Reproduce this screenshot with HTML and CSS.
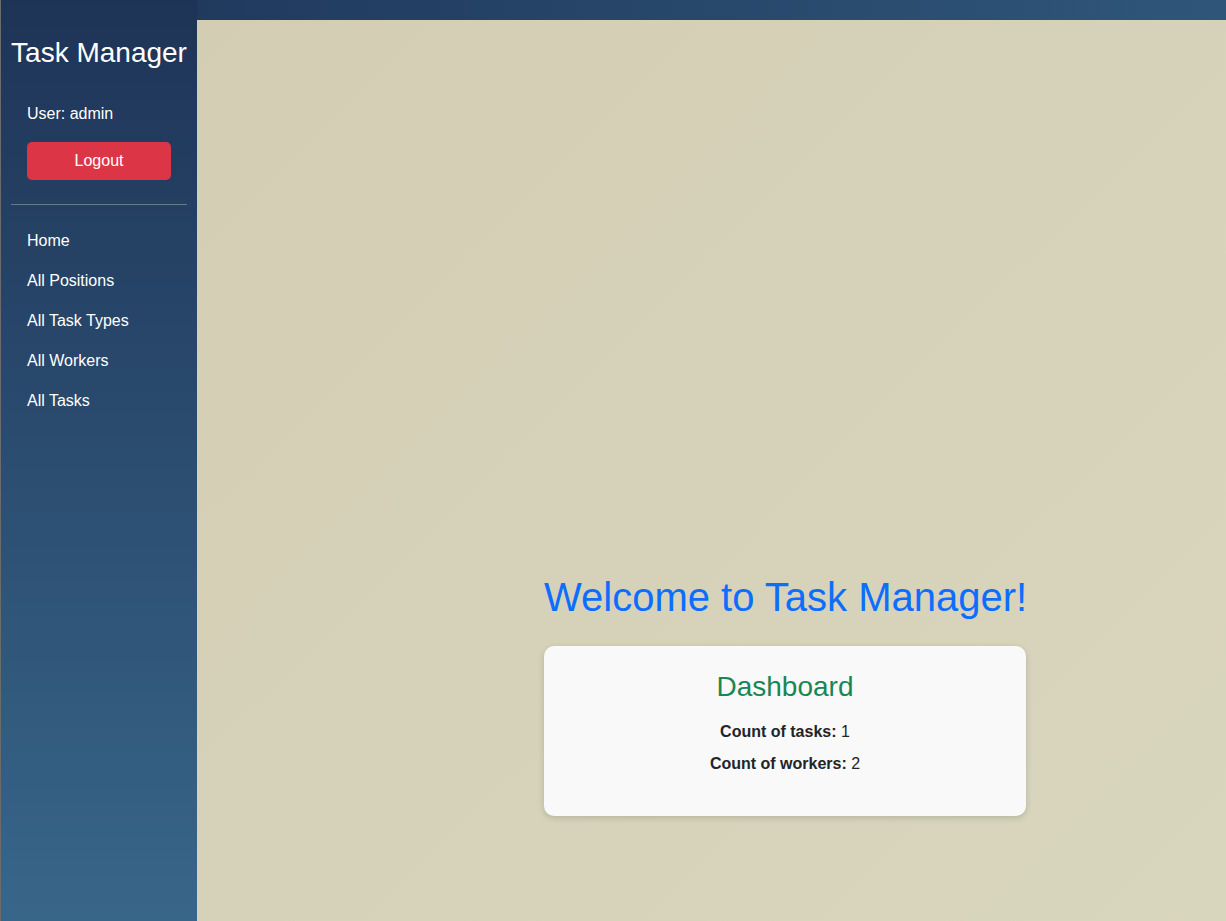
FILE: index.html
```html
<!DOCTYPE html>
<html lang="en">
<head>
<meta charset="utf-8">
<title>Task Manager</title>
<link rel="stylesheet" href="styles.css">
</head>
<body>
<aside class="sidebar">
  <h3 class="brand">Task Manager</h3>
  <div class="user">User: admin</div>
  <button class="logout">Logout</button>
  <hr class="divider">
  <nav class="nav">
    <a href="#">Home</a>
    <a href="#">All Positions</a>
    <a href="#">All Task Types</a>
    <a href="#">All Workers</a>
    <a href="#">All Tasks</a>
  </nav>
</aside>
<div class="main">
  <div class="topbar"></div>
  <div class="content">
    <div class="welcome">
      <h1 class="title">Welcome to Task Manager!</h1>
      <div class="card">
        <h3 class="card-title">Dashboard</h3>
        <p><strong>Count of tasks:</strong> 1</p>
        <p><strong>Count of workers:</strong> 2</p>
      </div>
    </div>
  </div>
</div>
</body>
</html>
```
FILE: styles.css
```css
* { box-sizing: border-box; }
html, body { height: 100%; }
body {
  margin: 0;
  display: flex;
  font-family: "Liberation Sans", Arial, sans-serif;
  font-size: 16px;
  line-height: 1.5;
  color: #212529;
  overflow: hidden;
}
.sidebar {
  width: 197px;
  flex: 0 0 197px;
  border-left: 1px solid #6b6b6b;
  background: linear-gradient(180deg, #1e3457 0%, #386689 100%);
  padding: 36px 10px 10px;
  color: #fff;
  display: flex;
  flex-direction: column;
}
.brand {
  margin: 0;
  font-size: 28px;
  font-weight: 400;
  line-height: 1.2;
  text-align: center;
  white-space: nowrap;
}
.user {
  margin: 32px 16px 0;
  line-height: 24px;
}
.logout {
  margin: 16px 16px 0;
  height: 38px;
  border: none;
  border-radius: 5px;
  background: #dc3545;
  color: #fff;
  font-family: inherit;
  font-size: 16px;
}
.divider {
  margin: 24px 0 16px;
  border: 0;
  border-top: 1px solid rgba(255,255,255,0.3);
  height: 0;
}
.nav { display: flex; flex-direction: column; }
.nav a {
  color: #fff;
  text-decoration: none;
  padding: 8px 16px;
  line-height: 24px;
}
.main {
  flex: 1;
  display: flex;
  flex-direction: column;
  min-width: 0;
}
.topbar {
  height: 20px;
  flex: 0 0 20px;
  background: linear-gradient(90deg, #203a5e 0%, #2f5679 100%);
}
.content {
  flex: 1;
  background: linear-gradient(135deg, #d3ceb3 0%, #d6d2b9 50%, #d8d6bd 100%);
  padding: 553px 0 0 347px;
}
.welcome { width: 482px; }
.title {
  margin: 0 0 25px;
  font-size: 40px;
  font-weight: 400;
  line-height: 1.2;
  color: #0d6efd;
  white-space: nowrap;
}
.card {
  background: #f9f9f9;
  border-radius: 10px;
  box-shadow: 0 2px 6px rgba(0,0,0,0.15);
  padding: 24px 24px 32px;
  text-align: center;
}
.card-title {
  margin: 0 0 16px;
  font-size: 28px;
  font-weight: 400;
  line-height: 1.2;
  color: #198754;
}
.card p { margin: 0 0 8px; }
```
